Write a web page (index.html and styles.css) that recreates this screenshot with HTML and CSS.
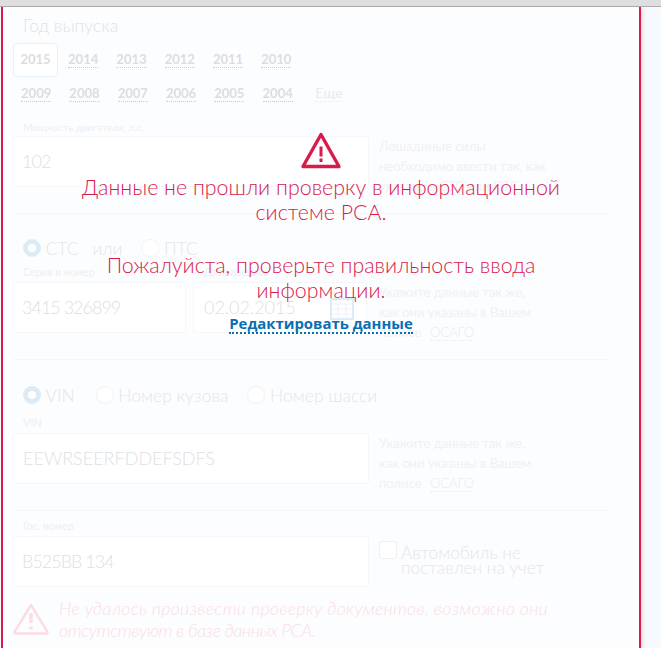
FILE: index.html
```html
<!DOCTYPE html>
<html lang="ru">
<head>
    <meta charset="UTF-8">
    <title>Проверка данных</title>
    <link rel="stylesheet" href="styles.css">
</head>
<body>
    <div class="topbar"></div>
    <div class="page">
        <div class="card">
            <h2 class="title">Год выпуска</h2>
            <div class="years">
                <span class="year selected"><b>2015</b></span>
                <span class="year"><b>2014</b></span>
                <span class="year"><b>2013</b></span>
                <span class="year"><b>2012</b></span>
                <span class="year"><b>2011</b></span>
                <span class="year"><b>2010</b></span>
            </div>
            <div class="years second">
                <span class="year"><b>2009</b></span>
                <span class="year"><b>2008</b></span>
                <span class="year"><b>2007</b></span>
                <span class="year"><b>2006</b></span>
                <span class="year"><b>2005</b></span>
                <span class="year"><b>2004</b></span>
                <span class="year more"><b>Еще</b></span>
            </div>

            <div class="field-label power-label">Мощность двигателя, л.с.</div>
            <div class="row">
                <div class="input wide digits">102</div>
                <div class="help">Лошадиные силы<br>необходимо ввести так, как<br>указано в <span class="dots">СТС</span> или <span class="dots">ПТС</span></div>
            </div>
            <div class="divider"></div>

            <div class="radios docs">
                <span class="radio on"></span><span class="radio-text">СТС</span>
                <span class="radio-text or">или</span>
                <span class="radio"></span><span class="radio-text">ПТС</span>
            </div>
            <div class="labels">
                <span class="field-label half">Серия и номер</span>
                <span class="field-label">Дата выдачи</span>
            </div>
            <div class="row">
                <div class="input narrow digits">3415 326899</div>
                <div class="input narrow date">
                    02.02.2015
                    <svg class="calendar" width="24" height="24" viewBox="0 0 24 24" fill="none" stroke="#dcebf5">
                        <rect x="1" y="2" width="22" height="20" stroke-width="2"/>
                        <path d="M1 7h22M1 12h22M1 17h22M8 7v15M16 7v15" stroke="#ebf3f9"/>
                        <path d="M6 0v4M18 0v4" stroke-width="2"/>
                    </svg>
                </div>
                <div class="help">Укажите данные так же,<br>как они указаны в Вашем<br>полисе <a class="link">ОСАГО</a></div>
            </div>
            <div class="divider"></div>

            <div class="radios vin">
                <span class="radio on"></span><span class="radio-text vin-text">VIN</span>
                <span class="radio"></span><span class="radio-text">Номер кузова</span>
                <span class="radio"></span><span class="radio-text">Номер шасси</span>
            </div>
            <div class="field-label vin-label">VIN</div>
            <div class="row">
                <div class="input wide">EEWRSEERFDDEFSDFS</div>
                <div class="help">Укажите данные так же,<br>как они указаны в Вашем<br>полисе <a class="link">ОСАГО</a></div>
            </div>
            <div class="divider"></div>

            <div class="field-label plate-label">Гос. номер</div>
            <div class="row">
                <div class="input wide digits">В525ВВ 134</div>
                <div class="check">
                    <span class="box"></span>
                    <span class="check-text">Автомобиль не<br>поставлен на учет</span>
                </div>
            </div>
            <div class="warning">
                <svg width="36" height="32" viewBox="0 0 36 32" fill="none" stroke="#fadde5" stroke-width="2.4" stroke-linejoin="round">
                    <path d="M18 2 L34.5 29 Q35 30.5 33 30.5 H3 Q1 30.5 1.500 29 Z"/>
                    <path d="M18 10v10" stroke-width="3.4"/>
                    <path d="M18 23.500v3" stroke-width="3.4"/>
                </svg>
                <p><span class="warn-first">Не удалось произвести проверку документов, возможно они</span><span class="warn-second">отсутствуют в базе данных РСА.</span></p>
            </div>

            <div class="overlay">
                <svg class="alert" width="42" height="40" viewBox="0 0 42 40" fill="none">
                    <path d="M21 2.500 L39 34.500 H3 Z" stroke="#d81b4a" stroke-width="3.400" stroke-linejoin="round"/>
                    <path d="M21 14.500v10M21 26.500v3.500" stroke="#d81b4a" stroke-width="3"/>
                </svg>
                <p class="msg">Данные не прошли проверку в информационной<br>системе РСА.</p>
                <p class="msg second-msg">Пожалуйста, проверьте правильность ввода<br>информации.</p>
                <a class="edit">Редактировать данные</a>
            </div>
        </div>
    </div>
</body>
</html>
```

FILE: styles.css
```css
* {
    box-sizing: border-box;
}

html, body {
    height: 100%;
}

body {
    margin: 0;
    background: #f6fafe;
    font-family: Lato, "Open Sans", sans-serif;
    font-weight: 300;
    overflow: hidden;
}

.topbar {
    height: 7px;
    background: #dedede;
    border-bottom: 1px solid #aaa;
}

.page {
    padding-left: 1px;
    height: 641px;
    overflow: hidden;
}

/* Карточка с красной рамкой */
.card {
    position: relative;
    width: 640px;
    height: 660px;
    padding: 8px 0 0 10px;
    background: #fcfdff;
    border-left: 2px solid #d81b4a;
    border-right: 2px solid #d81b4a;
    box-shadow: 3px 0 4px -1px rgba(216, 27, 74, 0.15);
}

.title {
    margin: 0 0 0 10px;
    font-size: 17.500px;
    line-height: 22px;
    font-weight: 300;
    color: #e0e2e6;
}

.years {
    display: flex;
    margin-top: 6px;
    height: 34px;
    align-items: center;
    color: #dcdde0;
}

.years.second {
    margin-top: 0;
    height: 33px;
    margin-left: -1px;
}

.year {
    width: 48.300px;
    margin-bottom: 2px;
    font-size: 13px;
    text-align: center;
}

.year b {
    font-weight: 700;
    border-bottom: 1px dotted #ccc;
}

.year.selected {
    width: 45px;
    height: 34px;
    line-height: 30px;
    margin: 0 1px 0 0;
    background: #fff;
    border: 1px solid #e6f1f9;
    border-radius: 4px;
}

.year.selected b {
    border: 0;
}

.year.more {
    margin-left: 3px;
    font-size: 14px;
    color: #dfeef8;
}

.year.more b {
    font-weight: 400;
    border-bottom-color: #dfeef8;
}

.field-label {
    font-size: 10.500px;
    font-weight: 400;
    line-height: 14px;
    color: #eeeff1;
    padding-left: 10px;
}

.power-label {
    margin-top: 10px;
    margin-bottom: 2px;
    font-size: 10.200px;
}

.row {
    display: flex;
    gap: 7px;
    height: 51px;
}

.input {
    height: 51px;
    padding-left: 9px;
    font-size: 18px;
    line-height: 49px;
    color: #dedfe2;
    background: #fff;
    border: 1px solid #f4f6fa;
    border-radius: 3px;
}

.input.digits {
    padding-left: 8px;
    letter-spacing: -1px;
}

.input.wide {
    width: 356px;
    margin-right: 3px;
}

.input.narrow {
    width: 173px;
}

.input.date {
    position: relative;
    width: 174px;
    margin-right: 5px;
    padding-left: 10px;
}

.calendar {
    position: absolute;
    right: 12px;
    top: 14px;
}

.help {
    font-size: 13px;
    font-weight: 400;
    line-height: 20px;
    color: #f0f1f3;
    white-space: nowrap;
}

.dots {
    border-bottom: 1px dotted #f0f1f3;
}

.link {
    margin-left: 5px;
    font-weight: 300;
    color: #dfeef8;
    border-bottom: 1px dotted #dfeef8;
}

.divider {
    width: 596px;
    height: 1px;
    margin-top: 26px;
    background: #f5f7fa;
}

.radios {
    display: flex;
    align-items: center;
    padding-left: 10px;
    height: 20px;
    font-size: 17.500px;
    color: #e4e6ea;
}

.docs {
    margin-top: 24px;
}

.vin {
    margin-top: 25px;
}

.radio {
    width: 18px;
    height: 18px;
    flex-shrink: 0;
    background: #fff;
    border: 1px solid #f0f2f5;
    border-radius: 50%;
}

.radio.on {
    border: 5px solid #dcebf5;
}

.radio-text {
    margin-left: 4.500px;
    margin-right: 19px;
}

.radio-text.vin-text {
    margin-right: 21px;
}

.docs .radio-text {
    margin-right: 14px;
}

.docs .radio-text.or {
    margin-left: 0;
    margin-right: 19px;
}

.labels {
    display: flex;
    margin-top: 7px;
    margin-bottom: 3px;
}

.half {
    width: 181px;
}

.vin-label {
    margin-top: 11px;
    margin-bottom: 3px;
    font-size: 11px;
}

.plate-label {
    margin-top: 8px;
    margin-bottom: 3px;
}

.check {
    display: flex;
    gap: 4px;
    padding-top: 5px;
}

.box {
    width: 18px;
    height: 18px;
    background: #fff;
    border: 1px solid #eff1f4;
    border-radius: 3px;
}

.check-text {
    font-size: 17.300px;
    line-height: 15px;
    padding-top: 4px;
    color: #e4e6ea;
}

.warning {
    display: flex;
    gap: 10px;
    margin-top: 16px;
    align-items: flex-start;
}

.warning p {
    margin: -6px 0 0;
    font-size: 17.800px;
    line-height: 22px;
    font-style: italic;
    white-space: nowrap;
    color: #fadde5;
}

.warn-first {
    display: block;
    letter-spacing: 0.250px;
}

.warn-second {
    display: block;
    letter-spacing: -0.400px;
}

/* Сообщение поверх формы */
.overlay {
    position: absolute;
    top: 125px;
    left: 0;
    right: 0;
    display: flex;
    flex-direction: column;
    align-items: center;
    text-align: center;
}

.alert {
    margin-bottom: 3px;
}

.msg {
    margin: 0;
    font-size: 21.400px;
    line-height: 25px;
    color: #d81b4a;
}

.second-msg {
    margin-top: 28px;
}

.edit {
    margin-top: 12px;
    font-size: 14.900px;
    line-height: 17px;
    font-weight: 700;
    font-family: "Open Sans", sans-serif;
    color: #0a6eb4;
    border-bottom: 2px dotted #0a6eb4;
}
```
